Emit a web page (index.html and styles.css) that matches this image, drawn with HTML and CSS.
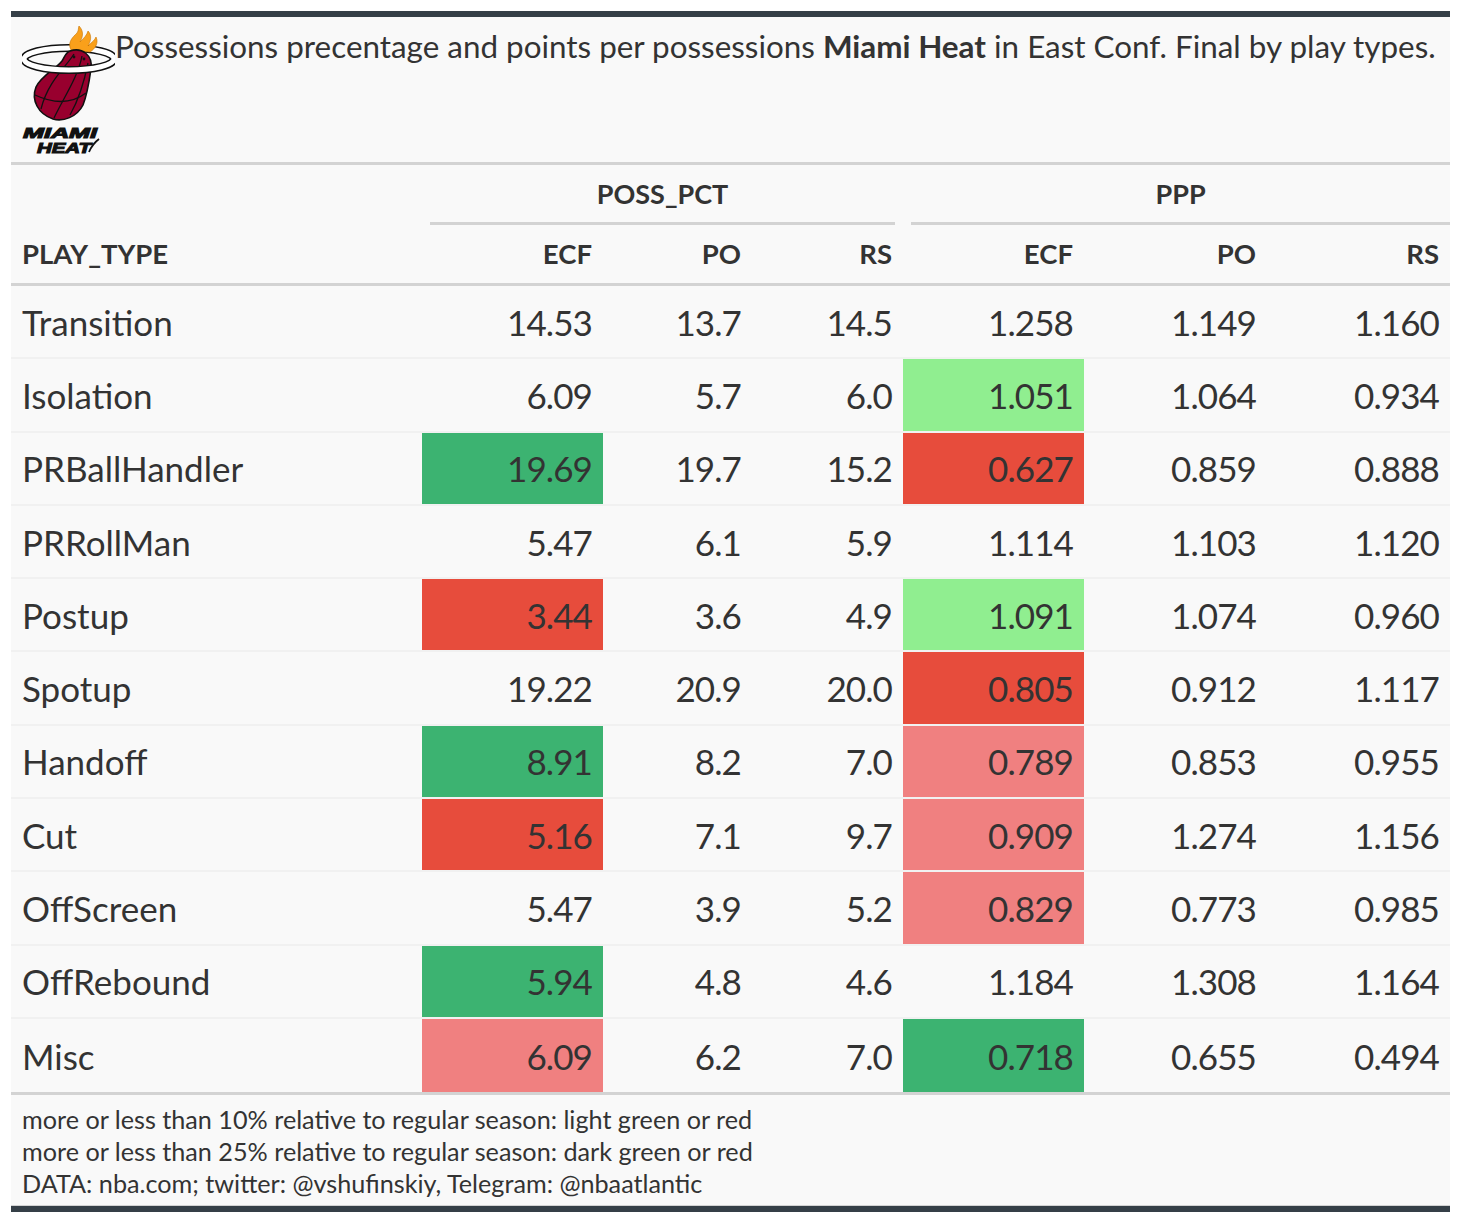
FILE: index.html
```html
<!DOCTYPE html>
<html>
<head>
<meta charset="utf-8">
<link rel="stylesheet" href="styles.css">
</head>
<body>
<div class="card">
  <div class="title">
    <svg class="logo" width="93" height="130" viewBox="0 0 93 130">
      <!-- back of hoop -->
      <path d="M2 34 A45 11 0 0 1 92 34" fill="none" stroke="#111" stroke-width="8"/>
      <path d="M2 34 A45 11 0 0 1 92 34" fill="none" stroke="#fff" stroke-width="5"/>
      <!-- flame -->
      <path d="M49 25 C45 17 51 12 55 8 C57 5 56 3 57 1 C62 6 61 12 58 17 C62 13 65 10 66 6 C70 10 69 16 66 21 C70 17 73 15 74 12 C77 18 73 24 68 27 Z" fill="#f9a01b" stroke="#c77400" stroke-width="0.6"/>
      <!-- ball -->
      <path d="M48 26 C60 22 71 30 69 44 C67 58 65 70 61 80 C55 92 41 97 31 94 C16 89 9 75 14 62 C20 50 34 44 40 36 C43 31 44 27 48 26 Z" fill="#98002e" stroke="#111" stroke-width="1.6"/>
      <path d="M52 29 C44 42 26 56 19 84" fill="none" stroke="#111" stroke-width="1.3"/>
      <path d="M60 31 C56 52 42 72 32 93" fill="none" stroke="#111" stroke-width="1.3"/>
      <path d="M66 38 C62 58 56 76 48 90" fill="none" stroke="#111" stroke-width="1.3"/>
      <path d="M13 70 C30 78 48 80 64 68" fill="none" stroke="#111" stroke-width="1.3"/>
      <circle cx="52" cy="32" r="1.4" fill="#111"/>
      <circle cx="62" cy="34" r="1.4" fill="#111"/>
      <!-- front of hoop -->
      <path d="M2 34 A45 11 0 0 0 92 34" fill="none" stroke="#111" stroke-width="8"/>
      <path d="M2 34 A45 11 0 0 0 92 34" fill="none" stroke="#fff" stroke-width="5"/>
      <text x="1" y="113" class="logo-text" textLength="74" lengthAdjust="spacingAndGlyphs">MIAMI</text>
      <text x="15" y="128" class="logo-text" textLength="54" lengthAdjust="spacingAndGlyphs">HEAT</text>
      <path d="M67 127 C70 120 73 117 77 114" fill="none" stroke="#111" stroke-width="1.8"/>
    </svg>
    <div class="title-text">Possessions precentage and points per possessions <b>Miami Heat</b> in East Conf. Final by play types.</div>
  </div>
  <table class="tbl">
    <colgroup>
      <col class="c1"><col class="c2"><col class="c3"><col class="c4"><col class="c5"><col class="c6"><col class="c7">
    </colgroup>
    <thead>
      <tr class="spanrow">
        <th></th>
        <th colspan="3"><div class="spanner sp1">POSS_PCT</div></th>
        <th colspan="3"><div class="spanner sp2">PPP</div></th>
      </tr>
      <tr class="colrow">
        <th class="left">PLAY_TYPE</th>
        <th>ECF</th><th>PO</th><th>RS</th>
        <th>ECF</th><th>PO</th><th>RS</th>
      </tr>
    </thead>
    <tbody>
      <tr><td class="left">Transition</td><td>14.53</td><td>13.7</td><td>14.5</td><td>1.258</td><td>1.149</td><td>1.160</td></tr>
      <tr><td class="left">Isolation</td><td>6.09</td><td>5.7</td><td>6.0</td><td class="lg">1.051</td><td>1.064</td><td>0.934</td></tr>
      <tr><td class="left">PRBallHandler</td><td class="dg">19.69</td><td>19.7</td><td>15.2</td><td class="dr">0.627</td><td>0.859</td><td>0.888</td></tr>
      <tr><td class="left">PRRollMan</td><td>5.47</td><td>6.1</td><td>5.9</td><td>1.114</td><td>1.103</td><td>1.120</td></tr>
      <tr><td class="left">Postup</td><td class="dr">3.44</td><td>3.6</td><td>4.9</td><td class="lg">1.091</td><td>1.074</td><td>0.960</td></tr>
      <tr><td class="left">Spotup</td><td>19.22</td><td>20.9</td><td>20.0</td><td class="dr">0.805</td><td>0.912</td><td>1.117</td></tr>
      <tr><td class="left">Handoff</td><td class="dg">8.91</td><td>8.2</td><td>7.0</td><td class="lr">0.789</td><td>0.853</td><td>0.955</td></tr>
      <tr><td class="left">Cut</td><td class="dr">5.16</td><td>7.1</td><td>9.7</td><td class="lr">0.909</td><td>1.274</td><td>1.156</td></tr>
      <tr><td class="left">OffScreen</td><td>5.47</td><td>3.9</td><td>5.2</td><td class="lr">0.829</td><td>0.773</td><td>0.985</td></tr>
      <tr><td class="left">OffRebound</td><td class="dg">5.94</td><td>4.8</td><td>4.6</td><td>1.184</td><td>1.308</td><td>1.164</td></tr>
      <tr><td class="left">Misc</td><td class="lr">6.09</td><td>6.2</td><td>7.0</td><td class="dg">0.718</td><td>0.655</td><td>0.494</td></tr>
    </tbody>
  </table>
  <div class="footer">
    <div>more or less than 10% relative to regular season: light green or red</div>
    <div>more or less than 25% relative to regular season: dark green or red</div>
    <div>DATA: nba.com; twitter: @vshufinskiy, Telegram: @nbaatlantic</div>
  </div>
</div>
</body>
</html>
```
FILE: styles.css
```css
html, body {
  margin: 0;
  padding: 0;
  background: #ffffff;
}
body {
  padding: 11px 0 0 11px;
  font-family: Lato, "Noto Sans", sans-serif;
  color: #333333;
}
.card {
  width: 1439px;
  background: #f9f9f9;
  border-top: 6px solid #353f47;
  border-bottom: 6px solid #353f47;
}
.title {
  display: flex;
  align-items: flex-start;
  height: 148px;
  padding-left: 11px;
  box-sizing: border-box;
  border-bottom: 3px solid #d3d3d3;
}
.logo {
  flex: none;
  margin-top: 8px;
}
.logo-text {
  font-family: "Liberation Sans", Arial, sans-serif;
  font-weight: 700;
  font-style: italic;
  font-size: 14px;
  fill: #111;
  stroke: #111;
  stroke-width: 1px;
}
.title-text {
  font-size: 31.4px;
  line-height: 36px;
  margin-top: 11px;
  white-space: nowrap;
}
.title-text b {
  font-weight: 700;
}
.tbl {
  width: 1439px;
  border-collapse: collapse;
  table-layout: fixed;
}
.c1 { width: 411px; }
.c2 { width: 181px; }
.c3 { width: 149px; }
.c4 { width: 151px; }
.c5 { width: 181px; }
.c6 { width: 183px; }
.c7 { width: 183px; }
th {
  font-weight: 700;
  font-size: 27.5px;
  text-align: right;
  padding: 0 11px;
}
.spanrow th {
  padding: 14px 0 0 0;
  height: 46px;
  vertical-align: top;
  text-align: center;
  font-size: 27px;
}
.spanner {
  line-height: 30px;
  padding-bottom: 13px;
  border-bottom: 3px solid #d3d3d3;
}
.sp1 { margin: 0 8px; }
.sp2 { margin: 0 0 0 8px; }
.colrow th {
  height: 57px;
  padding-bottom: 1px;
  border-bottom: 3px solid #d3d3d3;
}
th.left, td.left {
  text-align: left;
}
td {
  font-size: 35px;
  letter-spacing: -0.9px;
  text-align: right;
  padding: 0 11px;
  height: 71.3px;
  border-bottom: 2px solid #f1f1f1;
}
td.left {
  letter-spacing: 0;
}
tbody tr:last-child td {
  border-bottom: 0;
  height: 73.5px;
}
.dg { background: #3cb371; }
.lg { background: #90ee90; }
.dr { background: #e74c3c; }
.lr { background: #f08080; }
.footer {
  border-top: 3px solid #d3d3d3;
  border-bottom: 1px solid #d3d3d3;
  padding: 8px 11px 6px;
  font-size: 25.2px;
  line-height: 32px;
}
```
